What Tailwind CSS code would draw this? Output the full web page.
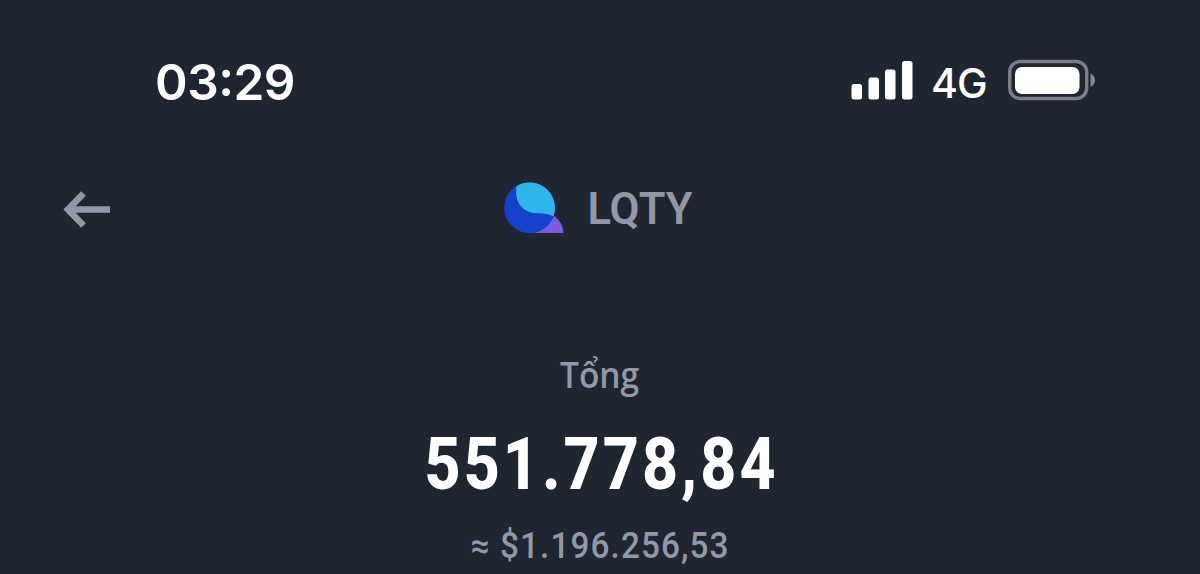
<!DOCTYPE html>
<html lang="vi">
<head>
  <meta charset="UTF-8" />
  <meta name="viewport" content="width=device-width, initial-scale=1.0"/>
  <title>LQTY</title>
  <script src="https://cdn.jsdelivr.net/npm/@tailwindcss/browser@4"></script>
</head>
<body class="bg-[#1f2632] text-white h-[574px] overflow-hidden">

  <!-- Status bar -->
  <div class="h-[164px] pl-[155px] pr-[104px] flex justify-between items-center">
    <span class="mt-px font-['Inter',sans-serif] font-semibold text-[49.5px] leading-none tracking-[-0.5px]">03<span class="inline-block -translate-y-[4px]">:</span>29</span>
    <div class="flex items-center">
      <svg class="w-[62px] h-[40px] -mt-1" viewBox="0 0 62 40" fill="#fff">
        <rect x="0.5" y="24" width="10.5" height="15.5" rx="2.5"/>
        <rect x="17.5" y="17.5" width="10.5" height="22" rx="2.5"/>
        <rect x="34" y="9.5" width="10.5" height="30" rx="2.5"/>
        <rect x="51" y="1" width="10.5" height="38.5" rx="2.5"/>
      </svg>
      <span class="mt-0.5 ml-[18px] w-[77px] font-['Inter',sans-serif] font-medium text-[41px] leading-none tracking-[-1px]">4G</span>
      <svg class="w-[88px] h-[42px] -mt-1" viewBox="0 0 88 42">
        <rect x="1.700" y="2.500" width="77" height="37" rx="10.5" fill="none" stroke="#7b7e88" stroke-width="3.4"/>
        <rect x="7" y="8" width="64.500" height="27" rx="7" fill="#fff"/>
        <path d="M82.500 14.500c6 2.500 6 11 0 13.500z" fill="#858993"/>
      </svg>
    </div>
  </div>

  <!-- Token header -->
  <div class="h-[90px] px-[63px] grid grid-cols-[1fr_auto_1fr] items-center">
    <svg class="w-[48px] h-[38px]" viewBox="0 0 48 38" fill="none" stroke="#9298a5" stroke-width="6.6">
      <path d="M4.500 19.500H47M20.500 3.500L5 19.500l15.500 16"/>
    </svg>
    <div class="flex items-center -ml-[3px]">
      <svg class="w-[60px] h-[52px] -mt-[2px]" viewBox="0 0 60 52">
        <path d="M30 51L50 34C56 38 59 44 59.500 51z" fill="#795cdf"/>
        <circle cx="25.700" cy="25.700" r="25.500" fill="#1542cd"/>
        <path d="M12.600 4A25.500 25.500 0 0 1 49.500 34.500C44 31 38 32 30 31C18 29.500 10 20 12.600 4z" fill="#2eb6ea"/>
      </svg>
      <span class="mt-px ml-[23px] font-['Roboto',sans-serif] font-semibold text-[43.5px] leading-none text-[#9298a5]">LQTY</span>
    </div>
  </div>

  <!-- Balance -->
  <div class="flex flex-col items-center text-[#9298a5]">
    <div class="mt-[99px] h-[44px] font-['Open_Sans',sans-serif] font-semibold text-[36px] leading-[44px] scale-x-[0.93]">Tổng</div>
    <div class="mt-[32px] ml-[3px] h-[72px] font-['Roboto',sans-serif] font-extrabold text-[72px] leading-[72px] text-white tracking-[3.5px] scale-x-[0.87]">551.778,84</div>
    <div class="mt-[27px] h-[36px] font-['Roboto',sans-serif] font-medium text-[36px] leading-[36px] tracking-[1.2px] whitespace-nowrap scale-x-[0.925]">≈ $1.196.256,53</div>
  </div>

</body>
</html>
